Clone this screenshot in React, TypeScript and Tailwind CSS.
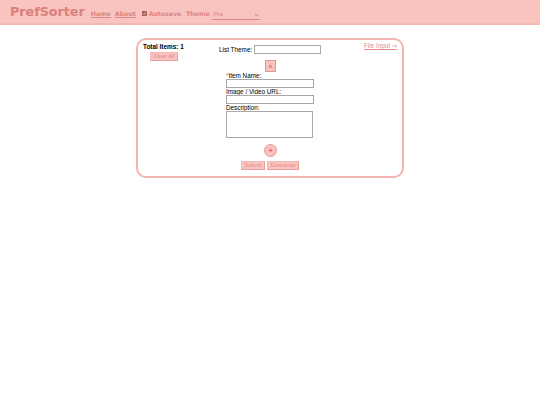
export default function App() {
  return (
    <div className="min-h-[405px] bg-white font-['Liberation_Sans',sans-serif]">
      <header className="flex h-[25px] items-center border-b-2 border-[#f2b9b5] bg-[#f9c3c0] pl-[10px] font-['DejaVu_Sans',sans-serif] font-bold text-[#dc8581]">
        <span className="mr-[6px] mt-[1px] text-[12.7px] leading-none text-[#da7f7a]">PrefSorter</span>
        <a className="mr-[4px] mt-[4px] text-[6.2px] underline">Home</a>
        <a className="mr-[6px] mt-[4px] text-[6.2px] underline">About</a>
        <span className="relative mr-[2px] mt-[4px] h-[5px] w-[5px]">
          <input type="checkbox" defaultChecked readOnly className="block h-[5px] w-[5px] appearance-none bg-[#a8605c]" />
          <svg className="absolute inset-0" width="5" height="5" viewBox="0 0 5 5"><path d="M1 2.5 2.2 3.7 4 1.2" fill="none" stroke="#f6d0ce" strokeWidth="0.7" /></svg>
        </span>
        <span className="mr-[5px] mt-[4px] text-[6.2px]">Autosave</span>
        <span className="mr-[2px] mt-[4px] text-[6.2px]">Theme</span>
        <div className="mt-[7px] flex h-[9px] w-[48px] items-center justify-between border-b border-[#dc8581] pl-[2px] pr-[1px] font-['Liberation_Sans',sans-serif] text-[5px] font-normal">
          <span>Pink</span>
          <svg width="5" height="4" viewBox="0 0 5 4"><path d="M0.8 1 2.5 2.8 4.2 1" fill="none" stroke="#c9706b" strokeWidth="0.9" /></svg>
        </div>
      </header>

      <main className="flex justify-center pt-[13px]">
        <section className="grid h-[140px] w-[268px] grid-cols-[80px_1fr_52px] rounded-[10px] border-2 border-[#f1b4b0] px-[5px] pt-[3px]">
          <div className="flex flex-col items-start">
            <div className="-mt-[1px] mb-[1px] whitespace-nowrap text-[6.4px] font-bold leading-[9px] text-black">Total Items: 1</div>
            <button className="ml-[7px] h-[9px] w-[28px] border border-[#f6b8b4] border-b-[#e9a09c] border-r-[#e9a09c] bg-[#f9c3c0] text-[5.6px] leading-[7px] text-[#e58c87]">Clear All</button>
          </div>

          <div className="flex flex-col items-start">
            <div className="-ml-[4px] mt-[2px] flex h-[9px] items-center text-[6.4px] text-black">
              <span className="w-[35px] whitespace-nowrap">List Theme:</span>
              <input className="h-[9px] w-[67px] border border-[#a8a8a8] bg-white" />
            </div>
            <button className="ml-[42px] mt-[6px] h-[12px] w-[11px] border border-[#e39692] bg-[#f9c3c0] text-[6px] font-bold leading-none text-[#c96c67]">x</button>
            <div className="ml-[3px] flex flex-col text-[6.35px] leading-[7px] text-black">
              <label className="whitespace-nowrap"><span className="text-[#e0605a]">*</span>Item Name:</label>
              <input className="h-[9px] w-[88px] border border-[#a8a8a8] bg-white" />
              <label className="whitespace-nowrap">Image / Video URL:</label>
              <input className="h-[9px] w-[88px] border border-[#a8a8a8] bg-white" />
              <label className="whitespace-nowrap">Description:</label>
              <textarea className="h-[27px] w-[87px] resize-none border border-[#a8a8a8] bg-white" />
            </div>
            <button className="ml-[41px] mt-[6px] flex h-[13px] w-[13px] items-center justify-center rounded-full border border-[#e39692] bg-[#f9c3c0] text-[7px] font-bold leading-none text-[#c96c67]">+</button>
            <div className="ml-[18px] mt-[4px] flex gap-[2px] text-[5.6px] text-[#e58c87]">
              <button className="h-[9px] w-[24px] border border-[#f6b8b4] border-b-[#e9a09c] border-r-[#e9a09c] bg-[#f9c3c0] leading-[7px]">Submit</button>
              <button className="h-[9px] w-[32px] border border-[#f6b8b4] border-b-[#e9a09c] border-r-[#e9a09c] bg-[#f9c3c0] leading-[7px]">Download</button>
            </div>
          </div>

          <div className="flex justify-end">
            <a className="-mt-[2px] h-[10px] whitespace-nowrap font-['DejaVu_Sans',sans-serif] text-[6.3px] leading-[9px] text-[#e58c87] underline"><span className="font-['Liberation_Sans',sans-serif]">File Input </span>→</a>
          </div>
        </section>
      </main>
    </div>
  );
}
